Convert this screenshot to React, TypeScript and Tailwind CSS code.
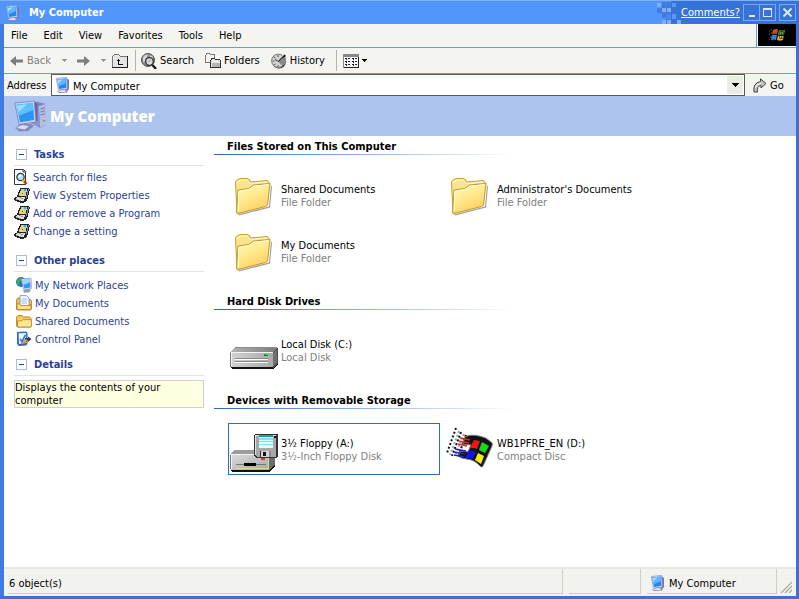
import type { ReactNode } from "react";

type Item = { name: string; kind: string; icon: ReactNode; selected?: boolean };

function ComputerIcon({ className }: { className: string }) {
  return (
    <svg viewBox="0 0 16 16" className={className} aria-hidden="true">
      <path d="M2 14.500 7 12l6 1-1 2.500-8 .5z" fill="#8487b4" />
      <path d="M3 14.300 7 13l5 .5-2 1.500H4z" fill="#e3e5f2" />
      <path d="M11 .8 14 3v9.500L10.500 14z" fill="#7377b4" />
      <path d="M1.200 1.500 11.500.3l1 11.700L3.500 13z" fill="#cfd8f2" stroke="#7e8cc4" strokeWidth=".6" />
      <path d="M2.200 2.500 10.600 1.500l.9 9.300L4.200 12z" fill="#2486f0" />
      <path d="M2.200 2.500 10.600 1.500l.4 4.500-7.700 3.500z" fill="#5db6ff" />
      <path d="m2.600 3 5-.6-4.500 4z" fill="#a9deff" />
    </svg>
  );
}

function BigComputerIcon() {
  return (
    <svg viewBox="0 0 32 32" className="size-8 shrink-0" aria-hidden="true">
      <path d="M17 4 22 1.500 32 4v21l-6 3-9-5z" fill="#8085c0" />
      <path d="M17 4 25 6v21l-8-4z" fill="#8f94cc" />
      <path d="M25 6 32 4v21l-6 2.500z" fill="#b9bce2" />
      <path d="M26.500 9 31 7.700M26.500 12l4.500-1.300M26.500 15l4.500-1.300" stroke="#7277a8" />
      <path d="M29 20h2v1.500h-2z" fill="#57b84e" />
      <path d="M1 28 8 23l9 1 3 2-6 5-9 .5z" fill="#8489bd" />
      <path d="M2 28 8 25l7 1-4 3.500z" fill="#d9dcf0" />
      <path d="M19.500 1.500 23.500 4v17L20 23.500z" fill="#5f64a8" />
      <path d="M.8 3 20.300 1 22 22 5 24.500z" fill="#c9d3f2" stroke="#7080c0" strokeWidth=".8" />
      <path d="M2.500 4.800 18.800 3l1.400 17L6 22.300z" fill="#2b93f2" />
      <path d="M2.500 4.800 18.800 3l.6 7L4.600 16z" fill="#5cc0ff" />
      <path d="m3 5.500 10-1.200-8.500 8z" fill="#9adcff" />
    </svg>
  );
}

function FolderIcon() {
  return (
    <svg viewBox="0 0 48 48" className="size-12 shrink-0" aria-hidden="true">
      <defs>
        <linearGradient id="folderFront" x1="0" y1="0" x2=".5" y2="1">
          <stop offset="0" stopColor="#fffbb8" />
          <stop offset=".55" stopColor="#ffe98b" />
          <stop offset="1" stopColor="#ffcf62" />
        </linearGradient>
      </defs>
      <path d="m8 43.500 31-8 2-21 1 1-2 21-31 8z" fill="#77746c" opacity=".7" />
      <path
        d="M5.500 11.500Q6 9 8 8.500L10 7.500h7q3 0 3.500 3.500l17-1.500 2 2.500-3 22L7 42.500z"
        fill="#f8e48a"
        stroke="#cba02c"
      />
      <path d="m7 12 3-3h7l3 3.500 17-1.500" fill="none" stroke="#fffbd0" />
      <path
        d="M8 19 19 17.500l4.500-3.500 16.500-1.500-2.500 21.500q-.5 1-2 1.500L8 42.500Q6.500 42.500 6.500 41z"
        fill="url(#folderFront)"
        stroke="#c4952a"
      />
      <path d="M8.500 40V20.500l10.500-2 5-3.300 14.500-1.600" fill="none" stroke="#fffddc" />
    </svg>
  );
}

function HardDiskIcon() {
  return (
    <svg viewBox="0 0 48 48" className="size-12 shrink-0" shapeRendering="crispEdges" aria-hidden="true">
      <defs>
        <linearGradient id="diskTop" x1="0" y1="0" x2="1" y2="0">
          <stop offset="0" stopColor="#b4b4b4" />
          <stop offset="1" stopColor="#7c7c7c" />
        </linearGradient>
        <linearGradient id="diskFront" x1="0" y1="0" x2="1" y2="0">
          <stop offset="0" stopColor="#d4d4d4" />
          <stop offset="1" stopColor="#a8a8a8" />
        </linearGradient>
      </defs>
      <path d="M1 41h42l5-6v3l-5 5H2z" fill="#111" />
      <path d="m0 26 5-5h41l2 1-5 5H0z" fill="url(#diskTop)" />
      <path d="M5 21h41v1H5z" fill="#8a8a8a" />
      <path d="m43 27 4-5h1v15l-5 5z" fill="#4c4c4c" />
      <path d="m43 27 4-4v13l-4 4z" fill="#707070" />
      <path d="M0 27h43v14H1l-1-1z" fill="url(#diskFront)" />
      <path d="M1 26h42v1H2v13H1z" fill="#f4f4f4" />
      <path d="M0 27h1v14H0z" fill="#777" />
      <path d="M34 28h4v2h-4z" fill="#0a8b1a" />
      <path d="M35 28h3v1h-3z" fill="#12e52c" />
      <path d="M5 32h33v1H5zM5 35h33v1H5z" fill="#888" />
      <path d="M5 33h33v1H5zM5 36h33v1H5z" fill="#fff" />
    </svg>
  );
}

function FloppyDriveIcon() {
  return (
    <svg viewBox="0 0 48 48" className="size-12 shrink-0" shapeRendering="crispEdges" aria-hidden="true">
      <defs>
        <linearGradient id="driveFront" x1="0" y1="0" x2="1" y2="1">
          <stop offset="0" stopColor="#dcdcdc" />
          <stop offset="1" stopColor="#a8a8a8" />
        </linearGradient>
      </defs>
      <path d="M1 45h38l6-6v2l-5 6H2z" fill="#111" />
      <path d="m0 29 5-4h39l1 1-6 5H0z" fill="#9c9c9c" />
      <path d="m39 29 6-4v14l-6 6z" fill="#6c6c6c" />
      <path d="M0 29h39v16H1l-1-1z" fill="url(#driveFront)" />
      <path d="M1 29h38v1H2v14H1z" fill="#f4f4f4" />
      <path d="M0 30h1v14H0z" fill="#777" />
      <path d="M5 43h33V31h1v13H5z" fill="#d8d79a" />
      <path d="M6 39h30v1H6z" fill="#777" />
      <path d="M14 38h12v3H14z" fill="#000" />
      <path d="M31 33h4v2h-4z" fill="#d33a22" />
      <path d="M25 9h22l1 1v22l-2 1H26l-2-2V10z" fill="#333" />
      <path d="M25 10h21v22H27l-2-2z" fill="#a8a8a8" />
      <path d="M25 10h1v20h-1zM25 10h21v1H25z" fill="#e0e0e0" />
      <path d="M29 10h14v13H29z" fill="#dffcff" />
      <path d="M29 10h14v2H29z" fill="#18a0a4" />
      <path d="M29 13h14v2H29zM29 16h14v1H29zM29 19h14v1H29z" fill="#6fe9f2" />
      <path d="M44 11h2v2h-2z" fill="#111" />
      <path d="M30 26h11v6H30z" fill="#333" />
      <path d="M31 26h8v6h-8z" fill="#d4d4d4" />
      <path d="M33 27h3v4h-3z" fill="#111" />
      <path d="M39 26h2v6h-2z" fill="#8a8a8a" />
    </svg>
  );
}

function WindowsDiscIcon() {
  return (
    <svg viewBox="0 0 48 48" className="size-12 shrink-0" aria-hidden="true">
      <g fill="none" strokeWidth="2" strokeDasharray="2 2">
        <path d="M10 3 1 28" stroke="#111" />
        <path d="M13 6 4 30" stroke="#8ea4d8" />
        <path d="M15 7 6 31" stroke="#111" />
        <path d="M18 9 9 31" stroke="#c98a9a" />
        <path d="M20 10 12 32" stroke="#111" />
      </g>
      <path
        d="M19 12q5-3 14-1 7 1 12 6 2 1 1 4l-9 20q-1 2-3 0-5-6-13-7-5 0-9-3l3-5 7 1 3-7-8-1z"
        fill="#111"
        stroke="#777"
        strokeWidth="1"
      />
      <path d="m28 15 6 1-3 8q-4-2-8 0z" fill="#ee1515" />
      <path d="m36 17 7 4-4 7-6-3z" fill="#13dc1f" />
      <path d="M22 26q5-1 8 1l-3 7q-4-1-8-1z" fill="#1010e8" />
      <path d="m32 28 6 3-3 8-6-4z" fill="#f4ef12" />
      <path d="m14 13 10 2M13 16l10 2M12 19l9 2" stroke="#d42c2c" strokeWidth="1.600" />
      <path d="m9 24 11 2M8 27l11 2M8 30l10 2" stroke="#2424c0" strokeWidth="1.600" />
    </svg>
  );
}

function SearchPageIcon() {
  return (
    <svg viewBox="0 0 16 16" className="size-4 shrink-0" aria-hidden="true">
      <path d="M.5.5h9l2 2v13H.5z" fill="#fff" stroke="#333" />
      <path d="M9 .5V3h2.500" fill="none" stroke="#333" />
      <circle cx="6.500" cy="8" r="3.700" fill="#a8e6f4" stroke="#333" strokeWidth="1.200" />
      <path d="M4.500 8.500 7 6" stroke="#fff" strokeWidth="1.500" />
      <path d="m9 11 3.500 4" stroke="#d62a18" strokeWidth="2.600" />
      <path d="m9 11 1.200 1.400" stroke="#f3d21a" strokeWidth="2.400" />
    </svg>
  );
}

function TaskIcon() {
  return (
    <svg viewBox="0 0 16 16" className="size-4 shrink-0" shapeRendering="crispEdges" aria-hidden="true">
      <path d="M6 1h9v1h1v2h-1v4h-1v4h-1v2h-1v1h-2v1H6v-1H3v-1H1v-1H0v-2h1v-1h2V8h1V5h1V3h1z" fill="#222" />
      <path d="M7 2h6v3h-1v4H5V6h1V4h1z" fill="#c9c9c0" />
      <path d="M14 2h1v2h-1v4h-1v3h-1V8h1V4h1z" fill="#8c8c8c" />
      <path d="M3 10h8v2h-1v2H7v-1H4v-1H2v-1h1z" fill="#dcdcdc" />
      <path d="M2 12h2v1h3v1H5v-1H2zM5 10h2v1h2v1H7v-1H5z" fill="#999" />
      <path d="M7 4h2v1h1v2H9v2H6V7h1z" fill="#eadf4a" />
      <path d="M10 2h2v2h-2z" fill="#25b8dc" />
      <path d="M8 6h1v1H8z" fill="#555" />
    </svg>
  );
}

function NetworkIcon() {
  return (
    <svg viewBox="0 0 16 16" className="size-4 shrink-0" aria-hidden="true">
      <circle cx="5" cy="5" r="5" fill="#1f6fd6" />
      <path d="M1 3q2-3 5-2.500L5 4 3 5l1 3-2 .5Q0 6 1 3z" fill="#3fae3c" />
      <path d="m7 13 5-1.500 3 1.500-2 2.500-5 .3z" fill="#9a9db8" />
      <path d="m5 2 10-1 .6 10.500L8 13z" fill="#dce2f0" stroke="#7f8bb0" strokeWidth=".6" />
      <path d="m6 3 8-.8.500 8.200L8.500 11.500z" fill="#3d94f0" />
      <path d="m6 3 8-.8.200 3L7 8z" fill="#9bd6ff" />
    </svg>
  );
}

function DocumentsIcon() {
  return (
    <svg viewBox="0 0 16 16" className="size-4 shrink-0" aria-hidden="true">
      <path d="M.6 4.500 2 3h3l1 1.500h8l1.400 1V14l-1 1H1.500l-1-1z" fill="#f4c34c" stroke="#a8741a" strokeWidth=".8" />
      <path d="M4 .6h6.500L13 3v8.500H4z" fill="#f4f9ff" stroke="#6c8fc8" strokeWidth=".8" />
      <path d="M5.500 4H11M5.500 6H11M5.500 8H11" stroke="#86b4ea" strokeWidth=".8" />
      <path d="M.8 9h3l1 1.500h9.500L15 9v5.500H1.200z" fill="#ffe08a" stroke="#b47d1e" strokeWidth=".8" />
    </svg>
  );
}

function SmallFolderIcon() {
  return (
    <svg viewBox="0 0 16 16" className="size-4 shrink-0" aria-hidden="true">
      <path d="M.6 4 2 2.600h4L7.500 4h6L15 5.500V14H1.500L.6 13z" fill="#f6cf58" stroke="#a8781c" strokeWidth=".9" />
      <path d="M1.500 14V8h4L7 6.700h8.400V13l-1 1z" fill="#ffe98f" stroke="#b98a26" strokeWidth=".9" />
    </svg>
  );
}

function ControlPanelIcon() {
  return (
    <svg viewBox="0 0 16 16" className="size-4 shrink-0" aria-hidden="true">
      <path d="m1 1 9-.4L11.500 2v11L10 14.500 3 15l-2-2z" fill="#2e66b8" />
      <path d="m2.500 2.300 7.500-.3.300 10L3 13z" fill="#e8f3ff" />
      <path d="m4 8 2 2.500L9.500 4" fill="none" stroke="#2d7be0" strokeWidth="1.600" />
      <path d="M9 7h3V5.500L15.500 8 12 11V9.500H9z" fill="#3a3a44" />
      <path d="m5 12 5-4 1.500 1.500-5 4z" fill="#e6a53c" stroke="#7c5012" strokeWidth=".5" />
    </svg>
  );
}

function ArrowIcon({ flip }: { flip?: boolean }) {
  return (
    <svg viewBox="0 0 13 12" className={flip ? "h-3 w-[13px] rotate-180" : "h-3 w-[13px]"} aria-hidden="true">
      <path d="M0 6 6 1v3.500h7v3H6V11z" fill="#7d7d7d" />
    </svg>
  );
}

function Caret({ className }: { className: string }) {
  return (
    <svg viewBox="0 0 6 3" className={className} shapeRendering="crispEdges" aria-hidden="true">
      <path d="M0 0h6L3 3z" fill="currentColor" />
    </svg>
  );
}

function UpFolderIcon() {
  return (
    <svg viewBox="0 0 16 14" className="h-3.5 w-4" shapeRendering="crispEdges" aria-hidden="true">
      <path d="M1 2 2 0h5l1 2h7v11H1z" fill="#e4e4e4" />
      <path d="M0 2h1v11H0zM2 0h5v1H2zM1 1h1v1H1zM7 1h1v1H7zM8 2h7v1H8z" fill="#777" />
      <path d="M15 2h1v12H0v-1h15z" fill="#222" />
      <path d="M6 5h1v5H6zM5 6h3v1H5zM6 10h5v1H6z" fill="#111" />
    </svg>
  );
}

function SearchIcon() {
  return (
    <svg viewBox="0 0 16 16" className="size-4" aria-hidden="true">
      <circle cx="7" cy="7" r="6.500" fill="#8c8c8c" stroke="#555" />
      <path d="M2 4q2-3 5-2.500L6 4l-2 2 1 2-3 1zM9 2l3 2-1 2-2-1z" fill="#d4d4d4" />
      <circle cx="8.500" cy="8.500" r="3.800" fill="#dcdcdc" stroke="#333" strokeWidth="1.300" />
      <path d="m7 9 3-2" stroke="#999" />
      <path d="m11.500 12 3.500 4" stroke="#111" strokeWidth="2.200" />
    </svg>
  );
}

function FoldersIcon() {
  return (
    <svg viewBox="0 0 16 15" className="h-[15px] w-4" shapeRendering="crispEdges" aria-hidden="true">
      <path d="M0 2h1V0h4v1h5v9H0z" fill="#777" />
      <path d="M1 2h1V1h3v1h4v7H1z" fill="#f4f4f4" />
      <path d="M5 7h1V5h4v1h5v1h1v8H5z" fill="#333" />
      <path d="M6 7h1V6h3v1h5v7H6z" fill="#e8e8e8" />
      <path d="M7 10h8v4H7z" fill="#b4b4b4" />
    </svg>
  );
}

function HistoryIcon() {
  return (
    <svg viewBox="0 0 16 16" className="size-4" aria-hidden="true">
      <circle cx="8" cy="8.500" r="7" fill="#333" />
      <circle cx="7.300" cy="7.800" r="6.700" fill="#d4d4d4" stroke="#777" />
      <path d="M7 8 14 3q2 4 0 8l-4 1z" fill="#888" />
      <path d="M7 8 13 1l2 2z" fill="#111" />
      <path d="m7 8 5.500-7 1 .5z" fill="#fff" />
      <path d="M7 2v2M7 12v2M1.500 8h2M3 4l1.500 1M3 12l1.500-1M11 12l1 1" stroke="#555" />
      <path d="M4 6.500 7.500 8.500 10 6" fill="none" stroke="#333" />
    </svg>
  );
}

function ViewsIcon() {
  return (
    <svg viewBox="0 0 16 14" className="h-3.5 w-4" shapeRendering="crispEdges" aria-hidden="true">
      <path d="M0 0h16v14H0z" fill="#222" />
      <path d="M1 3h14v10H1z" fill="#f8f8f8" />
      <path d="M0 0h16v3H0zM0 3h1v11H0z" fill="#888" />
      <path
        d="M2 4h2v1H2zM5 4h2v1H5zM9 4h2v1H9zM12 4h2v1h-2zM2 7h2v1H2zM5 7h2v1H5zM9 7h2v1H9zM12 7h2v1h-2zM2 10h2v1H2zM5 10h2v1H5zM9 10h2v1H9zM12 10h2v1h-2zM3 5h1v1H3zM10 5h1v1h-1zM3 8h1v1H3zM10 8h1v1h-1zM3 11h1v1H3zM10 11h1v1h-1z"
        fill="#222"
      />
    </svg>
  );
}

function GoIcon() {
  return (
    <svg viewBox="0 0 14 15" className="h-[15px] w-3.5" aria-hidden="true">
      <path
        d="M1 14Q-.5 5 7.500 3.500V.8L13 5.500 8 10V7.500Q3.500 8 4.500 14z"
        fill="#c2c2c2"
        stroke="#333"
        strokeWidth=".9"
      />
      <path d="M2.500 10Q3 6 8 5.500" fill="none" stroke="#fff" />
    </svg>
  );
}

function FlagLogo() {
  return (
    <svg viewBox="0 0 18 14" className="h-3.5 w-[18px]" aria-hidden="true">
      <path d="M1 3h1M3 2h1M1 6h1M2 9h2M1 11h1M4 12h1M3 5h1" stroke="#9a5a4a" />
      <path d="M5 2q3-1.500 5-.5L9 6Q7 5 4 6z" fill="#c8502c" />
      <path d="M11 2q3 1 6 0l-1 4.500q-3 1-6 0z" fill="#5fae3c" />
      <path d="M4 7q3-1 5 0l-1 5q-2-1-5 0z" fill="#3b7bd4" />
      <path d="M10 7.500q3 1 6 0L15 12q-3 1-6 0z" fill="#e0b42c" />
      <path d="M11.500 3.500h4v7h-4zM13.500 3v8M11 7h5" fill="none" stroke="#222" strokeWidth=".6" />
    </svg>
  );
}

function TitlePixels() {
  return (
    <svg viewBox="0 0 25 24" className="h-6 w-[25px]" shapeRendering="crispEdges" aria-hidden="true">
      <path d="M6 1h19v23H10v-7H6v-5H1V7h5z" fill="#3f7ce2" />
      <path d="M15 0h10v24H15z" fill="#3672d8" />
      <path d="M1 2h4v4H1zM6 7h4v4H6zM11 7h4v4h-4zM6 19h4v4H6zM11 19h4v4h-4zM21 19h4v4h-4z" fill="#7db0fc" />
      <path d="M16 2h4v4h-4zM16 13h4v5h-4z" fill="#5a98f8" />
      <path d="M11 13h4v5h-4z" fill="#4a88ee" />
    </svg>
  );
}

const MENUS = ["File", "Edit", "View", "Favorites", "Tools", "Help"];

const TASKS = [
  { label: "Search for files", icon: <SearchPageIcon /> },
  { label: "View System Properties", icon: <TaskIcon /> },
  { label: "Add or remove a Program", icon: <TaskIcon /> },
  { label: "Change a setting", icon: <TaskIcon /> },
];

const PLACES = [
  { label: "My Network Places", icon: <NetworkIcon /> },
  { label: "My Documents", icon: <DocumentsIcon /> },
  { label: "Shared Documents", icon: <SmallFolderIcon /> },
  { label: "Control Panel", icon: <ControlPanelIcon /> },
];

const GROUPS: { title: string; items: Item[] }[] = [
  {
    title: "Files Stored on This Computer",
    items: [
      { name: "Shared Documents", kind: "File Folder", icon: <FolderIcon /> },
      { name: "Administrator's Documents", kind: "File Folder", icon: <FolderIcon /> },
      { name: "My Documents", kind: "File Folder", icon: <FolderIcon /> },
    ],
  },
  {
    title: "Hard Disk Drives",
    items: [{ name: "Local Disk (C:)", kind: "Local Disk", icon: <HardDiskIcon /> }],
  },
  {
    title: "Devices with Removable Storage",
    items: [
      { name: "3½ Floppy (A:)", kind: "3½-Inch Floppy Disk", icon: <FloppyDriveIcon />, selected: true },
      { name: "WB1PFRE_EN (D:)", kind: "Compact Disc", icon: <WindowsDiscIcon /> },
    ],
  },
];

function TitleBar() {
  return (
    <header className="flex h-6 items-center border-t border-[#7fb0fb] bg-[#5296fb]">
      <div className="flex flex-1 items-center gap-2 pl-[5px]">
        <ComputerIcon className="size-4" />
        <h1 className="text-[11px] font-bold text-white">My Computer</h1>
      </div>
      <TitlePixels />
      <div className="flex h-full items-center bg-[#3672d8] pr-[3px]">
        <a href="#comments" className="mr-[3px] text-white underline">
          Comments?
        </a>
        <div className="mr-[3px] flex h-[17px] border border-[#79abf8]">
          <button aria-label="Minimize" className="flex w-4 items-end justify-center border-r border-[#79abf8] pb-[3px]">
            <span className="h-0.5 w-1.5 bg-[#dbe8ff]" />
          </button>
          <button aria-label="Maximize" className="flex w-[15px] items-center justify-center">
            <span className="h-[9px] w-[9px] border border-t-2 border-[#dbe8ff]" />
          </button>
        </div>
        <button aria-label="Close" className="flex size-[17px] items-center justify-center border border-[#79abf8]">
          <svg viewBox="0 0 9 9" className="size-[9px]" aria-hidden="true">
            <path d="m.5.5 8 8M8.500.5l-8 8" stroke="#dbe8ff" strokeWidth="2" />
          </svg>
        </button>
      </div>
    </header>
  );
}

function Toolbar() {
  return (
    <div className="flex h-[26px] items-center border-b border-[#6c96e0] pl-1.5">
      <button className="flex items-center gap-1 text-[#808080]">
        <ArrowIcon />
        Back
      </button>
      <button aria-label="Back history" className="ml-2.5 text-[#999]">
        <Caret className="h-[3px] w-1.5" />
      </button>
      <button aria-label="Forward" className="ml-2.5">
        <ArrowIcon flip />
      </button>
      <button aria-label="Forward history" className="ml-2.5 text-[#999]">
        <Caret className="h-[3px] w-1.5" />
      </button>
      <button aria-label="Up" className="ml-1.5">
        <UpFolderIcon />
      </button>
      <div className="mr-[5px] ml-[7px] h-[21px] w-px bg-[#b4b4ac]" />
      <button className="flex items-center gap-[3px]">
        <SearchIcon />
        Search
      </button>
      <button className="ml-[11px] flex items-center gap-[3px]">
        <FoldersIcon />
        Folders
      </button>
      <button className="ml-[11px] flex items-center gap-[3px]">
        <HistoryIcon />
        History
      </button>
      <div className="mr-1.5 ml-[11px] h-[21px] w-px bg-[#b4b4ac]" />
      <button aria-label="Views" className="flex items-center gap-0.5">
        <ViewsIcon />
        <Caret className="h-[3px] w-1.5" />
      </button>
    </div>
  );
}

function PanelHeading({ title }: { title: string }) {
  return (
    <div className="flex h-[22px] items-center border-b border-[#e4e4e4] pl-0.5">
      <button aria-label={`Collapse ${title}`} className="flex size-[11px] items-center justify-center border border-[#a9bbe4]">
        <span className="h-px w-[5px] bg-[#2b3f94]" />
      </button>
      <h2 className="ml-[7px] text-[11px] font-bold text-[#2b3f94]">{title}</h2>
    </div>
  );
}

function LinkList({ links, className }: { links: { label: string; icon: ReactNode }[]; className: string }) {
  return (
    <ul className={className}>
      {links.map((link) => (
        <li key={link.label}>
          <a href="#open" className="flex h-[18px] items-center gap-[3px] text-[#2b3f94]">
            {link.icon}
            {link.label}
          </a>
        </li>
      ))}
    </ul>
  );
}

function ItemGroup({ title, items }: { title: string; items: Item[] }) {
  return (
    <section>
      <h2 className="h-[18px] pl-[13px] text-[11px] leading-[22px] font-bold">{title}</h2>
      <div className="h-px w-[300px] bg-linear-to-r from-[#2a66c8] to-white" />
      <div className="mt-3.5 ml-3.5 flex max-w-[428px] flex-wrap gap-1">
        {items.map((item) => (
          <button
            key={item.name}
            className={
              item.selected
                ? "flex h-[52px] w-[212px] items-center gap-[3px] border border-[#316ac5] px-px text-left"
                : "flex h-[52px] w-[212px] items-center gap-[3px] border border-transparent px-px text-left"
            }
          >
            {item.icon}
            <span className="pt-0.5 leading-[13px]">
              <span className="block">{item.name}</span>
              <span className="block text-[#808080]">{item.kind}</span>
            </span>
          </button>
        ))}
      </div>
    </section>
  );
}

function StatusBar() {
  return (
    <footer className="flex h-[29px] items-stretch border-t-2 border-[#e8e8e0] bg-[#f2f2ee] pr-1">
      <div className="mb-0.5 ml-1 flex flex-1 items-center border-r border-b border-[#cfcec2] pt-1 pl-px">6 object(s)</div>
      <div className="mb-0.5 ml-1.5 w-[72px] border-r border-b border-[#cfcec2]" />
      <div className="mb-0.5 ml-1.5 flex w-[130px] items-center gap-[3px] border-r border-b border-[#cfcec2] pt-1 pl-[3px]">
        <ComputerIcon className="size-4" />
        My Computer
      </div>
      <svg viewBox="0 0 11 11" className="mb-[3px] ml-1 size-[11px] self-end" aria-hidden="true">
        <path d="M0 11 11 0M4 11l7-7M8 11l3-3" stroke="#a5a494" strokeWidth="1.200" />
      </svg>
    </footer>
  );
}

export default function App() {
  return (
    <div className="flex min-h-screen flex-col bg-[#3672d8] font-['Tahoma','DejaVu_Sans_Condensed','DejaVu_Sans',sans-serif] text-[11px] leading-[13px] text-black">
      <TitleBar />
      <div className="mr-[3px] mb-[3px] flex flex-1 flex-col border-l-4 border-[#3f7be0] bg-white">
        <div className="bg-[#f4f4f0]">
          <div className="flex h-6 border-b border-[#6c96e0]">
            <nav className="flex flex-1 items-center gap-4 pl-[7px]">
              {MENUS.map((menu) => (
                <button key={menu}>{menu}</button>
              ))}
            </nav>
            <div className="border-l border-[#6c96e0]">
              <div className="flex h-full w-[39px] items-center justify-center border-b border-l border-white bg-black">
                <FlagLogo />
              </div>
            </div>
          </div>
          <Toolbar />
          <div className="flex h-[22px] items-center">
            <label htmlFor="address" className="w-[47px] pl-[3px]">
              Address
            </label>
            <div className="flex h-full flex-1 items-center border border-[#5a5a5a] bg-white pl-[3px]">
              <ComputerIcon className="size-4" />
              <input id="address" defaultValue="My Computer" className="ml-0.5 min-w-0 flex-1 pt-0.5 outline-none" />
              <button aria-label="Show addresses" className="mr-px flex h-[18px] w-4 items-center justify-center bg-[#ecebe4]">
                <Caret className="h-1 w-2" />
              </button>
            </div>
            <button className="flex w-[51px] items-center gap-[3px] pl-2">
              <GoIcon />
              Go
            </button>
          </div>
        </div>

        <div className="flex h-10 items-center gap-1 bg-[#adc5ee] pl-2.5">
          <BigComputerIcon />
          <div className="font-['Open_Sans','Noto_Sans',sans-serif] text-[15px] font-extrabold text-white">My Computer</div>
        </div>

        <main className="flex flex-1">
          <aside className="w-[210px] pt-2 pr-2.5 pl-2.5">
            <PanelHeading title="Tasks" />
            <LinkList links={TASKS} className="mt-0.5 mb-2.5" />
            <PanelHeading title="Other places" />
            <LinkList links={PLACES} className="mt-1 mb-1.5 pl-0.5" />
            <PanelHeading title="Details" />
            <p className="mt-1 border border-[#d0d0d0] bg-[#ffffe1]">Displays the contents of your computer</p>
          </aside>
          <div className="flex flex-1 flex-col gap-3.5">
            {GROUPS.map((group) => (
              <ItemGroup key={group.title} {...group} />
            ))}
          </div>
        </main>
        <StatusBar />
      </div>
    </div>
  );
}
